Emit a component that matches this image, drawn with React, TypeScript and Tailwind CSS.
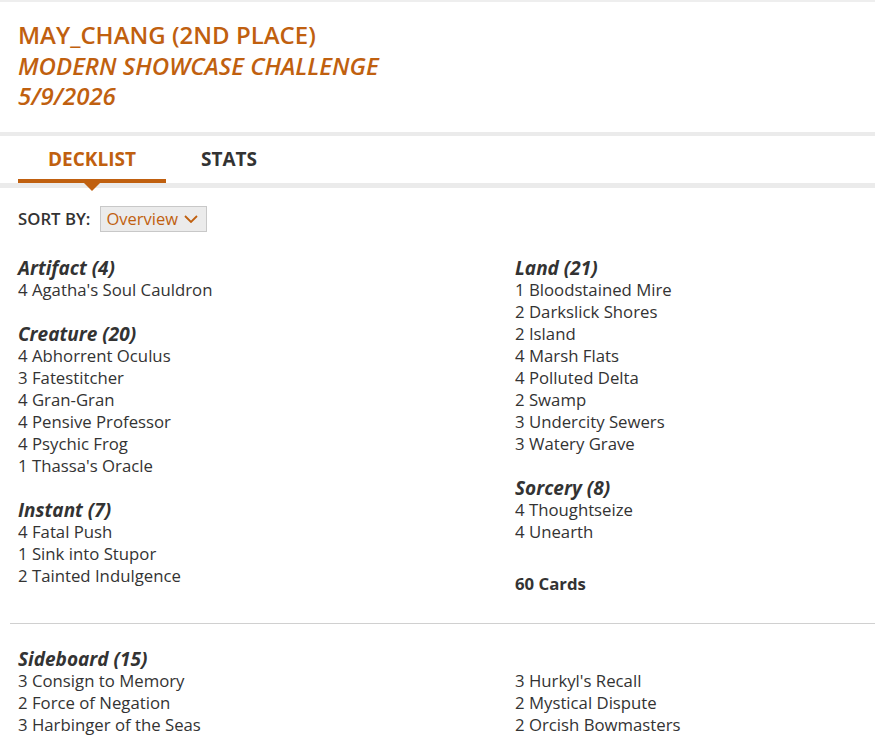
import React from 'react';

type Group = { name: string; cards: [number, string][] };

const mainLeft: Group[] = [
  { name: 'Artifact (4)', cards: [[4, "Agatha's Soul Cauldron"]] },
  {
    name: 'Creature (20)',
    cards: [
      [4, 'Abhorrent Oculus'],
      [3, 'Fatestitcher'],
      [4, 'Gran-Gran'],
      [4, 'Pensive Professor'],
      [4, 'Psychic Frog'],
      [1, "Thassa's Oracle"],
    ],
  },
  {
    name: 'Instant (7)',
    cards: [
      [4, 'Fatal Push'],
      [1, 'Sink into Stupor'],
      [2, 'Tainted Indulgence'],
    ],
  },
];

const mainRight: Group[] = [
  {
    name: 'Land (21)',
    cards: [
      [1, 'Bloodstained Mire'],
      [2, 'Darkslick Shores'],
      [2, 'Island'],
      [4, 'Marsh Flats'],
      [4, 'Polluted Delta'],
      [2, 'Swamp'],
      [3, 'Undercity Sewers'],
      [3, 'Watery Grave'],
    ],
  },
  {
    name: 'Sorcery (8)',
    cards: [
      [4, 'Thoughtseize'],
      [4, 'Unearth'],
    ],
  },
];

const sideLeft: [number, string][] = [
  [3, 'Consign to Memory'],
  [2, 'Force of Negation'],
  [3, 'Harbinger of the Seas'],
];

const sideRight: [number, string][] = [
  [3, "Hurkyl's Recall"],
  [2, 'Mystical Dispute'],
  [2, 'Orcish Bowmasters'],
];

const CardLines = ({ cards }: { cards: [number, string][] }) => (
  <ul>
    {cards.map(([qty, name]) => (
      <li key={name} className="text-[16.75px] leading-[22px]">
        {qty} {name}
      </li>
    ))}
  </ul>
);

const GroupBlock = ({ group }: { group: Group }) => (
  <div className="mb-[23px] last:mb-0">
    <h3 className="text-[19px] leading-[21px] font-bold italic">{group.name}</h3>
    <CardLines cards={group.cards} />
  </div>
);

export default function App() {
  return (
    <div className="min-h-screen bg-white font-['Open_Sans',sans-serif] text-[#333]">
      <div className="h-[2px] bg-[#eeeeee]" />

      {/* Event heading */}
      <header className="px-[18px] pt-[18px] pb-[20px] text-[24px] leading-[30.5px] font-semibold text-[#c0600f]">
        <h1>MAY_CHANG (2ND PLACE)</h1>
        <p className="italic">MODERN SHOWCASE CHALLENGE</p>
        <p className="italic">5/9/2026</p>
      </header>

      {/* Tabs */}
      <div className="h-[4px] bg-[#ebebeb]" />
      <nav className="flex h-[47px] px-[18px]">
        <button className="relative w-[148px] text-[19px] font-bold text-[#c0600f]">
          DECKLIST
          <span className="absolute inset-x-0 bottom-0 h-[4px] bg-[#c0600f]" />
          <span className="absolute left-1/2 top-full -translate-x-1/2 border-x-[8px] border-t-[8px] border-x-transparent border-t-[#c0600f]" />
        </button>
        <button className="ml-[35px] text-[19px] font-bold text-[#333]">STATS</button>
      </nav>
      <div className="h-[5px] bg-[#ebebeb]" />

      {/* Sort control */}
      <div className="mt-[18px] flex items-center px-[18px]">
        <span className="text-[16.75px] font-semibold">SORT BY:</span>
        <div className="ml-[10px] flex h-[26px] w-[107px] items-center justify-between border border-[#c8c8c8] bg-[#ebebeb] pl-[5px] pr-[8px] text-[16.5px] text-[#c0600f]">
          <span className="pt-[2px]">Overview</span>
          <svg width="14" height="8" viewBox="0 0 14 8" fill="none" stroke="#c0600f" strokeWidth="1.8">
            <path d="M1 1 L7 7 L13 1" />
          </svg>
        </div>
      </div>

      {/* Main deck */}
      <section className="mt-[26px] grid grid-cols-[497px_1fr] px-[18px]">
        <div>
          {mainLeft.map((g) => (
            <GroupBlock key={g.name} group={g} />
          ))}
        </div>
        <div>
          {mainRight.map((g) => (
            <GroupBlock key={g.name} group={g} />
          ))}
          <p className="mt-[30.5px] text-[16.75px] leading-[22px] font-bold">60 Cards</p>
        </div>
      </section>

      <hr className="mt-[28px] ml-[10px] border-t border-[#d0d0d0]" />

      {/* Sideboard */}
      <section className="mt-[24.5px] grid grid-cols-[497px_1fr] px-[18px]">
        <div>
          <h3 className="text-[19px] leading-[21px] font-bold italic">Sideboard (15)</h3>
          <CardLines cards={sideLeft} />
        </div>
        <div className="pt-[21px]">
          <CardLines cards={sideRight} />
        </div>
      </section>
    </div>
  );
}
